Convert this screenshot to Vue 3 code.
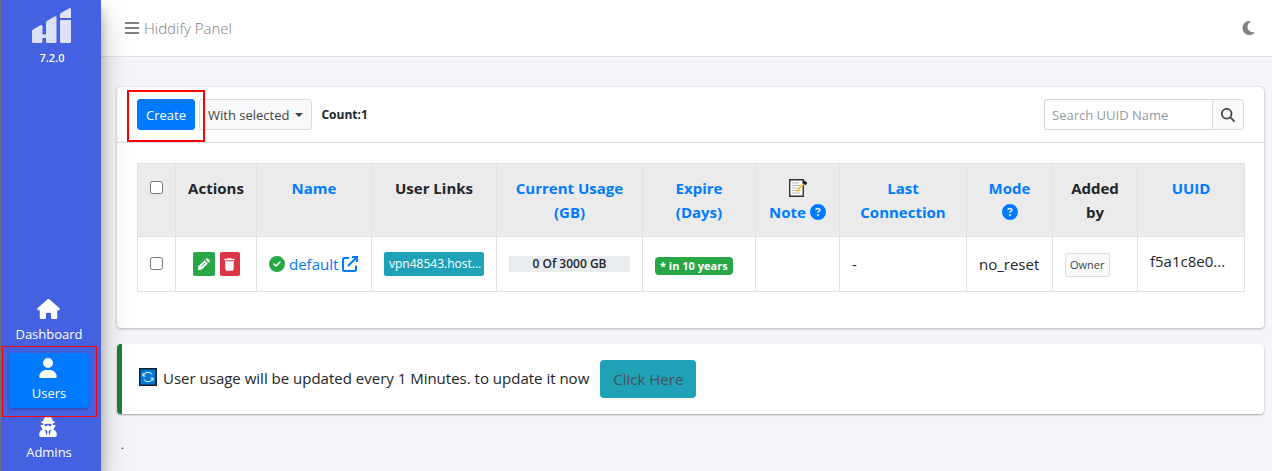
<script setup>
import { ref } from 'vue'

const search = ref('')
const columns = [
  { label: 'Actions' },
  { label: 'Name', sort: true },
  { label: 'User Links' },
  { label: 'Current Usage (GB)', sort: true },
  { label: 'Expire (Days)', sort: true },
  { label: 'Note', sort: true, memo: true, help: 'inline' },
  { label: 'Last Connection', sort: true },
  { label: 'Mode', sort: true, help: 'below' },
  { label: 'Added by' },
  { label: 'UUID', sort: true },
]
const users = [
  { name: 'default', link: 'vpn48543.host...', usage: '0 Of 3000 GB', expire: '* in 10 years', last: '-', mode: 'no_reset', owner: 'Owner', uuid: 'f5a1c8e0...' },
]
</script>

<template>
  <div class="layout">
    <aside class="sidebar">
      <a href="#" class="brand" aria-label="Hiddify">
        <svg class="logo" viewBox="0 0 40 36" aria-hidden="true">
          <path d="M0 23.500Q0 22 1.300 21.300L8.500 17.300Q10.500 16.300 10.500 18.500V26.500H14V15Q14 13.500 15.300 12.800L22.500 8.500Q24.500 7.500 24.500 9.500V33.500Q24.500 35 23 35H15.500Q14 35 14 33.500V30H10.500V33.500Q10.500 35 9 35H1.500Q0 35 0 33.500ZM28 12H39V33.500Q39 35 37.500 35H29.500Q28 35 28 33.500ZM28 10V6.800Q28 5.500 29.300 4.700L37 .4Q39 -.5 39 1.500V10Z" />
        </svg>
        <span>7.2.0</span>
      </a>
      <nav class="side-nav">
        <a href="#" class="side-link">
          <svg class="house" viewBox="0 0 576 512" aria-hidden="true"><path d="M575.8 255.5c0 18-15 32.1-32 32.1h-32l.7 160.2V472c0 22.100-17.900 40-40 40H392c-22.100 0-40-17.900-40-40V384c0-17.700-14.300-32-32-32H256c-17.700 0-32 14.300-32 32v88c0 22.100-17.900 40-40 40H104c-22.100 0-40-17.900-40-40V287.600H32c-18 0-32-14-32-32.100c0-9 3-17 10-24L266.400 8c7-7 15-8 22-8s15 2 21 7L564.800 231.500c8 7 12 15 11 24z" /></svg>
          <span>Dashboard</span>
        </a>
        <a href="#" class="side-link active">
          <svg viewBox="0 0 448 512" aria-hidden="true"><path d="M224 256A128 128 0 1 0 224 0a128 128 0 1 0 0 256zm-45.700 48C79.800 304 0 383.800 0 482.300C0 498.700 13.300 512 29.700 512H418.300c16.400 0 29.700-13.300 29.700-29.700C448 383.800 368.200 304 269.700 304H178.300z" /></svg>
          <span>Users</span>
          <i class="mark mark-users"></i>
        </a>
        <a href="#" class="side-link">
          <svg viewBox="0 0 448 512" aria-hidden="true"><path fill-rule="evenodd" d="M224 16c-18 0-28-16-56-16c-36 0-58 62-68 104c-36 7-56 17-56 28c0 12 22 22 54 29v15c0 10 1 20 4 30H44c-9 0-15 9-11 17l52 92C35 340 0 387 0 442v32c0 21 17 38 38 38h372c21 0 38-17 38-38v-32c0-55-35-102-85-127l52-92c4-8-2-17-11-17h-58c3-10 4-20 4-30v-15c32-7 54-17 54-29c0-11-20-21-56-28C338 62 316 0 280 0c-28 0-38 16-56 16zM132 180c48-8 136-8 184 0c0 34-14 54-42 54c-24 0-34-15-38-32h-24c-4 17-14 32-38 32c-28 0-42-20-42-54zM146 312l52 32 12 44-24 92zM302 312l-52 32-12 44 24 92z" /></svg>
          <span>Admins</span>
        </a>
      </nav>
    </aside>

    <div class="page">
      <header class="topbar">
        <button type="button" class="menu-button">
          <svg viewBox="0 0 14 12" aria-hidden="true"><path d="M0 0h14v2H0zM0 5h14v2H0zM0 10h14v2H0z" /></svg>
          <span>Hiddify Panel</span>
        </button>
        <button type="button" class="theme-button" aria-label="Dark mode">
          <svg viewBox="0 32 384 448" aria-hidden="true"><path d="M223.500 32C100 32 0 132.300 0 256S100 480 223.500 480c60.600 0 115.500-24.200 155.800-63.400c5-4.900 6.300-12.500 3.100-18.700s-10.100-9.700-17-8.500c-9.800 1.700-19.800 2.600-30.100 2.600c-96.900 0-175.500-78.800-175.500-176c0-65.800 36-123.100 89.300-153.300c6.100-3.500 9.200-10.500 7.700-17.300s-7.300-11.900-14.300-12.500c-6.300-.5-12.600-.8-19-.8z" /></svg>
        </button>
      </header>

      <main class="content">
        <section class="card">
          <div class="card-head">
            <div class="create">
              <button type="button" class="btn primary">Create</button>
              <i class="mark mark-create"></i>
            </div>
            <button type="button" class="btn light" aria-haspopup="true">With selected<i class="caret"></i></button>
            <strong class="count">Count:1</strong>
            <form class="search" @submit.prevent>
              <input v-model="search" type="text" placeholder="Search UUID Name" aria-label="Search UUID Name">
              <button type="submit" aria-label="Search">
                <svg viewBox="0 0 512 512" aria-hidden="true"><path d="M416 208c0 45.900-14.900 88.300-40 122.700L502.600 457.400c12.500 12.500 12.500 32.800 0 45.300s-32.800 12.500-45.300 0L330.700 376c-34.400 25.200-76.800 40-122.700 40C93.100 416 0 322.900 0 208S93.100 0 208 0S416 93.100 416 208zM208 352a144 144 0 1 0 0-288 144 144 0 1 0 0 288z" /></svg>
              </button>
            </form>
          </div>

          <div class="card-body">
            <table class="users">
              <colgroup>
                <col class="c-check"><col class="c-actions"><col class="c-name"><col class="c-links"><col class="c-usage"><col class="c-expire"><col class="c-note"><col class="c-last"><col class="c-mode"><col class="c-added"><col class="c-uuid">
              </colgroup>
              <thead>
                <tr>
                  <th><input type="checkbox" aria-label="Select all users"></th>
                  <th v-for="col in columns" :key="col.label" scope="col">
                    <component :is="col.sort ? 'a' : 'span'" :href="col.sort ? '#' : null">
                      <svg v-if="col.memo" class="memo" viewBox="0 0 18 20" aria-hidden="true">
                        <path d="M.7 1.700H14.300V18.300H.7Z" fill="#fafafa" stroke="#333" stroke-width="1.400" />
                        <path d="M3 5h7M3 7.500h8M3 10h5M3 12.500h9M3 15h8" stroke="#bbb" stroke-width="1" />
                        <path d="M15.500 4.500 7.500 13.500" stroke="#f5c542" stroke-width="2" />
                        <path d="m14 3.500 3.500 2.500" stroke="#222" stroke-width="3" />
                      </svg>
                      {{ col.label }}
                      <svg v-if="col.help" class="help" :class="col.help" viewBox="0 0 512 512" aria-hidden="true"><path d="M256 512A256 256 0 1 0 256 0a256 256 0 1 0 0 512zM169.800 165.300c7.900-22.300 29.100-37.300 52.800-37.300h58.300c34.900 0 63.100 28.300 63.100 63.100c0 22.600-12.100 43.500-31.700 54.800L280 264.400c-.2 13-10.900 23.600-24 23.600c-13.300 0-24-10.700-24-24V250.500c0-8.600 4.600-16.500 12.100-20.800l44.300-25.400c4.700-2.700 7.600-7.700 7.600-13.100c0-8.400-6.800-15.100-15.100-15.100H222.600c-3.400 0-6.400 2.100-7.500 5.300l-.4 1.200c-4.400 12.500-18.200 19-30.600 14.600s-19-18.200-14.600-30.600l.4-1.200zM224 352a32 32 0 1 1 64 0 32 32 0 1 1 -64 0z" /></svg>
                    </component>
                  </th>
                </tr>
              </thead>
              <tbody>
                <tr v-for="user in users" :key="user.uuid">
                  <td class="center"><input type="checkbox" :aria-label="'Select ' + user.name"></td>
                  <td>
                    <div class="actions">
                      <button type="button" class="edit" aria-label="Edit">
                        <svg viewBox="0 0 14 14" aria-hidden="true"><path d="m1.500 9 6.700-6.700 3.500 3.500L5 12.500 1 13.200Zm7.500-7.500L10 .6q.8-.8 1.600 0l1.800 1.800q.8.8 0 1.600L12.500 5Z" /><path d="m4.800 9.200 4-4" stroke="#28a745" /></svg>
                      </button>
                      <button type="button" class="remove" aria-label="Delete">
                        <svg viewBox="0 0 12 14" aria-hidden="true"><path d="M3.800.8 4.200.2h3.600l.4.600H11.500v1.700H.5V.8ZM1.200 3.500h9.600l-.6 9.200q-.1 1.100-1.200 1.100H3q-1.100 0-1.200-1.100Z" /><path d="M4 5.500v6M6 5.500v6M8 5.500v6" stroke="#f3d0d4" stroke-width=".4" /></svg>
                      </button>
                    </div>
                  </td>
                  <td>
                    <div class="name">
                      <svg class="ok" viewBox="0 0 512 512" aria-hidden="true"><path d="M256 512A256 256 0 1 0 256 0a256 256 0 1 0 0 512zM369 209L241 337c-9.400 9.400-24.600 9.400-33.900 0l-64-64c-9.400-9.400-9.400-24.600 0-33.900s24.600-9.400 33.900 0l47 47L335 175c9.400-9.400 24.600-9.400 33.900 0s9.400 24.600 0 33.900z" /></svg>
                      <a href="#">{{ user.name }}
                        <svg class="external" viewBox="0 0 16 16" aria-hidden="true"><path d="M7 2H2.500Q1 2 1 3.500v10Q1 15 2.500 15h10Q14 15 14 13.500V9.500M10 1h5v5M15 1 6 10" /></svg>
                      </a>
                    </div>
                  </td>
                  <td><a href="#" class="link-button">{{ user.link }}</a></td>
                  <td><div class="progress">{{ user.usage }}</div></td>
                  <td><span class="badge">{{ user.expire }}</span></td>
                  <td></td>
                  <td>{{ user.last }}</td>
                  <td>{{ user.mode }}</td>
                  <td><a href="#" class="owner">{{ user.owner }}</a></td>
                  <td class="uuid">{{ user.uuid }}</td>
                </tr>
              </tbody>
            </table>
          </div>
        </section>

        <section class="callout">
          <svg class="refresh" viewBox="0 0 18 18" aria-hidden="true">
            <path d="M.7.7h16.600v16.600H.7Z" fill="#0078d7" stroke="#14202c" stroke-width="1.400" />
            <path d="M4.300 7.500Q5.500 4.300 9 4.300q2.500 0 4.200 2.200M13.700 10.500Q12.500 13.700 9 13.700q-2.500 0-4.200-2.200M4 5v3h2.500M14 13v-3h-2.500" fill="none" stroke="#fff" stroke-width="1" />
          </svg>
          <span>User usage will be updated every 1 Minutes. to update it now</span>
          <a href="#" class="update">Click Here</a>
        </section>
        <p class="foot">.</p>
      </main>
    </div>
  </div>
</template>

<style>
body { margin: 0; background: #f4f6f9; }
</style>

<style scoped>
* { box-sizing: border-box; }
.layout { display: flex; min-height: 100vh; font: 15px/24px "Open Sans", "Noto Sans", sans-serif; color: #212529; }
a { color: #007bff; text-decoration: none; }
button, input { font: inherit; margin: 0; }
button { cursor: pointer; }
svg { fill: currentColor; }

.sidebar { position: relative; z-index: 2; flex: 0 0 101px; display: flex; flex-direction: column; background: #4461e2; border-left: 1px solid #6b6f78; box-shadow: 0 14px 28px rgba(0,0,0,.25), 0 10px 10px rgba(0,0,0,.22); }
.brand { display: flex; flex-direction: column; align-items: center; gap: 4px; padding: 8px 0 0 2px; color: #fff; font-size: 11px; line-height: 20px; font-weight: 600; }
.logo { width: 40px; height: 36px; fill: #dce2fa; }
.side-nav { display: flex; flex-direction: column; gap: 4px; margin-top: auto; padding: 0 12px 4px 8px; }
.side-link { position: relative; display: flex; flex-direction: column; align-items: center; gap: 4px; height: 55px; padding-top: 5px; border-radius: 4px; color: #fff; font-size: 13px; line-height: 22px; font-weight: 500; }
.side-link svg { width: 18px; height: 20px; margin-right: 2px; }
.side-link .house { width: 23px; }
.side-link.active { background: #007bff; box-shadow: 0 1px 3px rgba(0,0,0,.3); }
.mark { position: absolute; border: 1px solid #f00; pointer-events: none; }
.mark-users { inset: -7px -8px -9px -7px; }
.mark-create { inset: -9px -10px -12px; border-width: 2px; }

.page { flex: 1; min-width: 0; }
.topbar { display: flex; align-items: center; justify-content: space-between; height: 57px; padding: 0 17px 0 24px; background: #fff; border-bottom: 1px solid #dee2e6; }
.topbar button { display: flex; align-items: center; gap: 5px; padding: 0; border: 0; background: none; color: #808080; font-weight: 300; }
.menu-button svg { width: 14px; height: 12px; }
.theme-button svg { width: 13px; height: 14px; }

.content { padding: 30px 8px 0 16px; }
.card { border-radius: 4px; background: #fff; box-shadow: 0 0 1px rgba(0,0,0,.2), 0 1px 3px rgba(0,0,0,.25); }
.card-head { display: flex; align-items: center; height: 56px; padding: 0 20px; border-bottom: 1px solid #dcdfe2; }
.create { position: relative; z-index: 1; margin-right: 4px; }
.btn { display: flex; align-items: center; height: 31px; padding: 0 8px; border: 1px solid #007bff; border-radius: 3px; font-size: 13px; line-height: 20px; white-space: nowrap; }
.primary { background: #007bff; color: #fff; }
.light { border-color: #ddd; background: #f8f9fa; color: #444; }
.caret { margin-left: 6px; border: 4px solid transparent; border-top-color: #444; border-bottom: 0; }
.count { margin-left: 9px; font-size: 12px; font-weight: 700; }
.search { display: flex; width: 200px; height: 31px; margin-left: auto; }
.search input { flex: 1; min-width: 0; padding: 0 7px; border: 1px solid #ced4da; border-right: 0; border-radius: 3px 0 0 3px; background: #fff; font-size: 13px; }
.search input::placeholder { color: #939ba2; opacity: 1; }
.search button { display: grid; place-items: center; width: 32px; padding: 0; border: 1px solid #ddd; border-radius: 0 3px 3px 0; background: #f8f9fa; color: #444; }
.search svg { width: 14px; height: 14px; }

.card-body { padding: 20px 20px 36px; }
.users { width: 100%; table-layout: fixed; border-collapse: collapse; }
.c-check { width: 38px; } .c-actions { width: 81px; } .c-name { width: 115px; } .c-links { width: 125px; }
.c-usage { width: 146px; } .c-expire { width: 113px; } .c-note { width: 84px; } .c-last { width: 127px; }
.c-mode { width: 86px; } .c-added { width: 85px; } .c-uuid { width: 107px; }
th, td { padding: 12px; border: 1px solid #dee2e6; white-space: nowrap; }
th { height: 73px; background: #ebebeb; text-align: center; vertical-align: top; font-weight: 700; white-space: normal; }
th:nth-child(n + 2) { padding: 12px 11px; }
td { height: 55px; text-align: left; vertical-align: middle; }
td.center { text-align: center; }
.users input { width: 13px; height: 13px; vertical-align: 0; }
.memo { display: block; width: 18px; height: 20px; margin: 2px auto; }
.help { width: 16px; height: 16px; vertical-align: -2px; }
.help.below { display: block; margin: 4px auto; }
.actions { display: flex; justify-content: center; gap: 5px; }
.actions button { display: grid; place-items: center; height: 24px; padding: 0; border: 0; border-radius: 2px; color: #fff; }
.actions svg { height: 13px; width: 13px; }
.actions .edit { width: 22px; background: #28a745; }
.actions .remove { width: 20px; background: #dc3545; }
.name { display: flex; align-items: center; gap: 4px; }
.ok { width: 16px; height: 16px; fill: #28a745; }
.external { width: 16px; height: 16px; fill: none; stroke: currentColor; stroke-width: 2; vertical-align: -2px; }
.link-button { display: block; height: 24px; padding: 0 5px; border-radius: 2px; background: #1fa2b8; color: #fff; font-size: 12px; text-align: left; }
.progress { height: 16px; background: #e9ecef; font-size: 12px; line-height: 16px; font-weight: 600; text-align: center; }
.badge { display: inline-block; padding: 0 5px; border-radius: 4px; background: #28a745; color: #fff; font-size: 11px; line-height: 18px; font-weight: 700; vertical-align: middle; }
.owner { display: inline-block; padding: 0 4px; border: 1px solid #ddd; border-radius: 2px; background: #f8f9fa; color: #444; font-size: 11px; line-height: 22px; vertical-align: middle; }
td.uuid { vertical-align: top; }

.callout { display: flex; align-items: flex-start; gap: 6px; min-height: 70px; margin-top: 16px; padding: 16px 17px; border-left: 5px solid #1e7e34; border-radius: 4px; background: #fff; box-shadow: 0 1px 2px rgba(0,0,0,.35); line-height: 36px; }
.refresh { width: 18px; height: 18px; margin-top: 8px; }
.update { margin-left: 5px; padding: 0 13px; border-radius: 4px; background: #1fa2b8; color: #495057; line-height: 38px; }
.foot { margin: 20px 4px 0; font-size: 11px; line-height: 22px; color: #000; }
</style>
